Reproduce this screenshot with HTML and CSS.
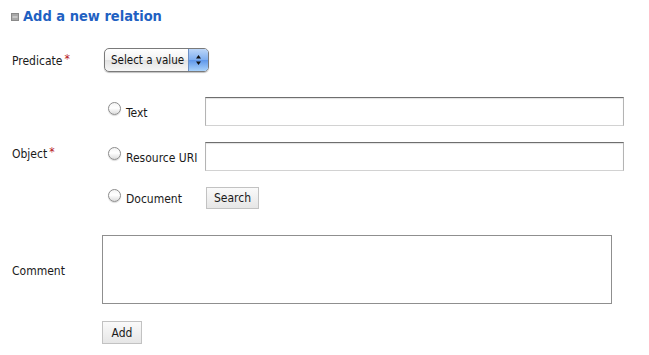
FILE: index.html
```html
<!DOCTYPE html>
<html lang="en">
<head>
    <meta charset="UTF-8">
    <title>Add a new relation</title>
    <link rel="stylesheet" href="styles.css">
</head>
<body>
    <div class="page">
        <h2 class="section-title">
            <svg class="toggle" width="8" height="8" viewBox="0 0 8 8">
                <rect x="0.5" y="0.5" width="7" height="7" fill="#a8a8a8" stroke="#8a8a8a"/>
                <line x1="1.5" y1="4" x2="6.5" y2="4" stroke="#e6e6e6" stroke-width="1"/>
            </svg>
            Add a new relation
        </h2>

        <form class="relation-form">
            <div class="form-row predicate-row">
                <label class="field-label">Predicate<span class="required">*</span></label>
                <div class="select">
                    <span class="select-text">Select a value</span>
                    <span class="select-arrows">
                        <svg width="7" height="12" viewBox="0 0 7 12">
                            <path d="M3.5 1 L6 4.5 L1 4.5 Z" fill="#111"/>
                            <path d="M3.5 11 L6 7.5 L1 7.5 Z" fill="#111"/>
                        </svg>
                    </span>
                </div>
            </div>

            <div class="form-row object-row">
                <label class="field-label">Object<span class="required">*</span></label>
                <div class="object-options">
                    <label class="option"><input type="radio" name="object" class="radio"> Text</label>
                    <input type="text" class="text-input">

                    <label class="option"><input type="radio" name="object" class="radio"> Resource URI</label>
                    <input type="text" class="text-input">

                    <label class="option"><input type="radio" name="object" class="radio"> Document</label>
                    <div><button type="button" class="btn search-btn">Search</button></div>
                </div>
            </div>

            <div class="form-row comment-row">
                <label class="field-label">Comment</label>
                <textarea class="comment"></textarea>
            </div>

            <div class="form-row add-row">
                <span></span>
                <div><button type="button" class="btn add-btn">Add</button></div>
            </div>
        </form>
    </div>
</body>
</html>
```

FILE: styles.css
```css
body {
    margin: 0;
    font-family: "DejaVu Sans Condensed", "DejaVu Sans", sans-serif;
    font-size: 12px;
    color: #1a1a1a;
    background: #fff;
}
.page {
    padding: 8px 0 0 12px;
}
.section-title {
    margin: 0 0 0 -1px;
    height: 16px;
    display: flex;
    align-items: center;
    gap: 4px;
    font-size: 14.5px;
    font-weight: bold;
    color: #1f61c2;
    line-height: 16px;
}
.toggle {
    margin-top: 1px;
}
.form-row {
    display: grid;
    grid-template-columns: 90px 1fr;
    align-items: center;
}
.predicate-row {
    margin-top: 24px;
    height: 24px;
}
.object-row {
    margin-top: 25px;
}
.comment-row {
    margin-top: 26px;
}
.add-row {
    margin-top: 17px;
}
.field-label {
    line-height: 14px;
    padding-top: 2px;
}
.required {
    color: #b5141a;
    margin-left: 2px;
    position: relative;
    top: -2px;
}
.select {
    margin-left: 2px;
    width: 105px;
    height: 24px;
    box-sizing: border-box;
    display: flex;
    border: 1px solid #7a7a7a;
    border-radius: 5px;
    overflow: hidden;
    background: linear-gradient(#ffffff, #f2f2f2 50%, #e2e2e2 51%, #f6f6f6);
    box-shadow: 0 1px 1px rgba(0, 0, 0, 0.25);
}
.select-text {
    flex: 1;
    padding-left: 6px;
    font-size: 11.5px;
    line-height: 23px;
    white-space: nowrap;
    color: #111;
}
.select-arrows {
    width: 19px;
    flex: none;
    display: flex;
    align-items: center;
    justify-content: center;
    border-left: 1px solid #6d8fc4;
    background: linear-gradient(#bcd6f8, #7eaef0 50%, #5f97ea 51%, #a9d2fb);
}
.object-options {
    display: grid;
    grid-template-columns: 103px 419px;
    row-gap: 16px;
    align-items: center;
}
.option {
    display: flex;
    align-items: center;
    height: 22px;
    box-sizing: border-box;
    padding-top: 2px;
}
.radio {
    appearance: none;
    -webkit-appearance: none;
    width: 13px;
    height: 13px;
    margin: 0 5px 8px 6px;
    border: 1px solid #8c8c8c;
    border-radius: 50%;
    background: linear-gradient(#f4f4f4, #ffffff 45%, #dcdcdc);
    box-shadow: 0 1px 1px rgba(0, 0, 0, 0.15);
}
.text-input {
    width: 419px;
    height: 29px;
    box-sizing: border-box;
    margin: 0;
    border: 1px solid #b4b4b4;
    border-top-color: #6e6e6e;
    border-bottom-color: #d2d2d2;
    box-shadow: inset 0 1px 1px rgba(0, 0, 0, 0.12);
    background: #fff;
}
.btn {
    font-family: "DejaVu Sans Condensed", "DejaVu Sans", sans-serif;
    font-size: 12px;
    color: #1a1a1a;
    border: 1px solid #c2c2c2;
    background: linear-gradient(#fafafa, #e6e6e6);
    padding: 0;
    margin: 0;
}
.search-btn {
    margin-left: 1px;
    width: 53px;
    height: 22px;
}
.comment {
    display: block;
    width: 510px;
    height: 69px;
    box-sizing: border-box;
    margin: 0;
    border: 1px solid #8f8f8f;
    resize: none;
}
.add-btn {
    width: 40px;
    height: 23px;
}
```
